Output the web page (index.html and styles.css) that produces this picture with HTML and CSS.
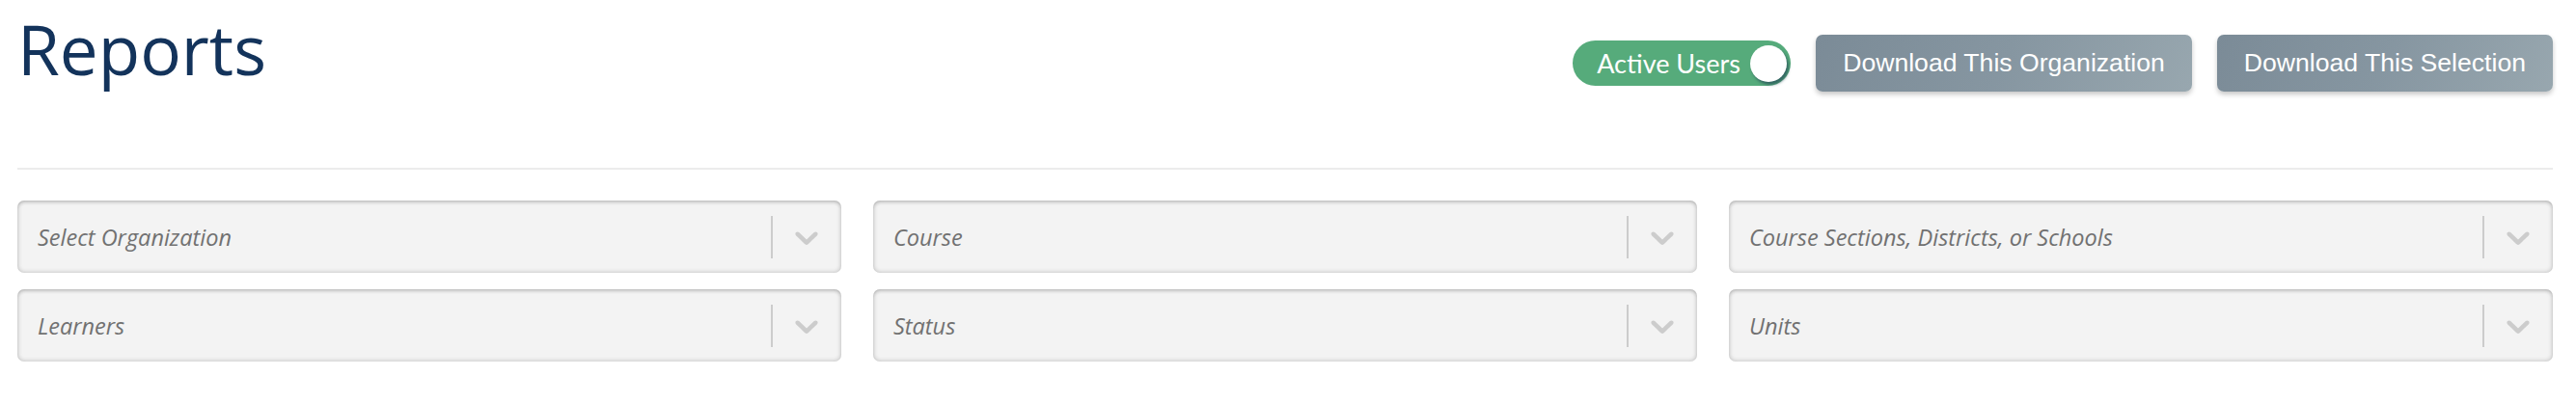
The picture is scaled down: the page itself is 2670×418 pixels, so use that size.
FILE: index.html
```html
<!DOCTYPE html>
<html lang="en">
<head>
<meta charset="utf-8">
<title>Reports</title>
<link rel="stylesheet" href="styles.css">
</head>
<body>
<div class="page">
  <header class="header">
    <h1 class="title">Reports</h1>
    <div class="actions">
      <div class="toggle">
        <span class="toggle-label">Active Users</span>
        <span class="knob"></span>
      </div>
      <button class="btn">Download This Organization</button>
      <button class="btn">Download This Selection</button>
    </div>
  </header>
  <div class="divider"></div>
  <div class="filters">
    <div class="select"><span class="placeholder">Select Organization</span><span class="sep"></span><svg class="chev" viewBox="0 0 20 20"><path d="M4.516 7.548c0.436-0.446 1.043-0.481 1.576 0l3.908 3.747 3.908-3.747c0.533-0.481 1.141-0.446 1.574 0 0.436 0.445 0.408 1.197 0 1.615-0.406 0.418-4.695 4.502-4.695 4.502-0.217 0.223-0.502 0.335-0.787 0.335s-0.57-0.112-0.789-0.335c0 0-4.287-4.084-4.695-4.502s-0.436-1.17 0-1.615z"/></svg></div>
    <div class="select"><span class="placeholder">Course</span><span class="sep"></span><svg class="chev" viewBox="0 0 20 20"><path d="M4.516 7.548c0.436-0.446 1.043-0.481 1.576 0l3.908 3.747 3.908-3.747c0.533-0.481 1.141-0.446 1.574 0 0.436 0.445 0.408 1.197 0 1.615-0.406 0.418-4.695 4.502-4.695 4.502-0.217 0.223-0.502 0.335-0.787 0.335s-0.57-0.112-0.789-0.335c0 0-4.287-4.084-4.695-4.502s-0.436-1.17 0-1.615z"/></svg></div>
    <div class="select"><span class="placeholder">Course Sections, Districts, or Schools</span><span class="sep"></span><svg class="chev" viewBox="0 0 20 20"><path d="M4.516 7.548c0.436-0.446 1.043-0.481 1.576 0l3.908 3.747 3.908-3.747c0.533-0.481 1.141-0.446 1.574 0 0.436 0.445 0.408 1.197 0 1.615-0.406 0.418-4.695 4.502-4.695 4.502-0.217 0.223-0.502 0.335-0.787 0.335s-0.57-0.112-0.789-0.335c0 0-4.287-4.084-4.695-4.502s-0.436-1.17 0-1.615z"/></svg></div>
    <div class="select"><span class="placeholder">Learners</span><span class="sep"></span><svg class="chev" viewBox="0 0 20 20"><path d="M4.516 7.548c0.436-0.446 1.043-0.481 1.576 0l3.908 3.747 3.908-3.747c0.533-0.481 1.141-0.446 1.574 0 0.436 0.445 0.408 1.197 0 1.615-0.406 0.418-4.695 4.502-4.695 4.502-0.217 0.223-0.502 0.335-0.787 0.335s-0.57-0.112-0.789-0.335c0 0-4.287-4.084-4.695-4.502s-0.436-1.17 0-1.615z"/></svg></div>
    <div class="select"><span class="placeholder">Status</span><span class="sep"></span><svg class="chev" viewBox="0 0 20 20"><path d="M4.516 7.548c0.436-0.446 1.043-0.481 1.576 0l3.908 3.747 3.908-3.747c0.533-0.481 1.141-0.446 1.574 0 0.436 0.445 0.408 1.197 0 1.615-0.406 0.418-4.695 4.502-4.695 4.502-0.217 0.223-0.502 0.335-0.787 0.335s-0.57-0.112-0.789-0.335c0 0-4.287-4.084-4.695-4.502s-0.436-1.17 0-1.615z"/></svg></div>
    <div class="select"><span class="placeholder">Units</span><span class="sep"></span><svg class="chev" viewBox="0 0 20 20"><path d="M4.516 7.548c0.436-0.446 1.043-0.481 1.576 0l3.908 3.747 3.908-3.747c0.533-0.481 1.141-0.446 1.574 0 0.436 0.445 0.408 1.197 0 1.615-0.406 0.418-4.695 4.502-4.695 4.502-0.217 0.223-0.502 0.335-0.787 0.335s-0.57-0.112-0.789-0.335c0 0-4.287-4.084-4.695-4.502s-0.436-1.17 0-1.615z"/></svg></div>
  </div>
</div>
</body>
</html>
```
FILE: styles.css
```css
html, body {
  margin: 0;
  padding: 0;
  background: #ffffff;
}
.page {
  padding: 0 24px 0 18px;
  font-family: "Open Sans", "Liberation Sans", sans-serif;
}
.header {
  display: flex;
  justify-content: space-between;
  align-items: flex-start;
  height: 174px;
}
.title {
  margin: 2px 0 0 0;
  font-family: "Open Sans", sans-serif;
  font-weight: 400;
  font-size: 71px;
  line-height: 97px;
  color: #13335b;
}
.actions {
  display: flex;
  align-items: center;
  gap: 26px;
  margin-top: 36px;
}
.toggle {
  display: flex;
  align-items: center;
  justify-content: space-between;
  box-sizing: border-box;
  width: 226px;
  height: 47px;
  padding: 0 4px 0 25px;
  border-radius: 24px;
  background: #56ab7b;
}
.toggle-label {
  font-family: Lato, "Open Sans", sans-serif;
  font-size: 27px;
  color: #ffffff;
  line-height: 1;
}
.knob {
  width: 38px;
  height: 38px;
  border-radius: 50%;
  background: #ffffff;
  box-shadow: 2px 3px 3px rgba(40, 80, 90, 0.75);
}
.btn {
  height: 59px;
  padding: 0 28px;
  border: none;
  border-radius: 7px;
  background: linear-gradient(115deg, #7b8b97 0%, #8696a1 50%, #98a7af 100%);
  box-shadow: 0 3px 5px rgba(0, 0, 0, 0.22);
  color: #ffffff;
  font-family: "Liberation Sans", Arial, sans-serif;
  font-size: 26.6px;
  line-height: 1;
  white-space: nowrap;
}
.divider {
  height: 2px;
  background: #ececec;
}
.filters {
  display: grid;
  grid-template-columns: repeat(3, 1fr);
  column-gap: 33px;
  row-gap: 17px;
  margin-top: 32px;
}
.select {
  display: flex;
  align-items: center;
  height: 75px;
  box-sizing: border-box;
  padding: 0 16px 0 21px;
  border-radius: 7px;
  background: #f3f3f3;
  box-shadow: inset 0 0 5px rgba(0, 0, 0, 0.24), inset 0 3px 4px -2px rgba(0, 0, 0, 0.16);
}
.placeholder {
  flex: 1;
  font-family: "Open Sans", sans-serif;
  font-style: italic;
  font-size: 23.5px;
  color: #717171;
  white-space: nowrap;
}
.sep {
  width: 2px;
  height: 44px;
  background: #cccccc;
  margin-top: 1px;
}
.chev {
  width: 40px;
  height: 40px;
  margin-left: 15px;
  fill: #cccccc;
}
```
